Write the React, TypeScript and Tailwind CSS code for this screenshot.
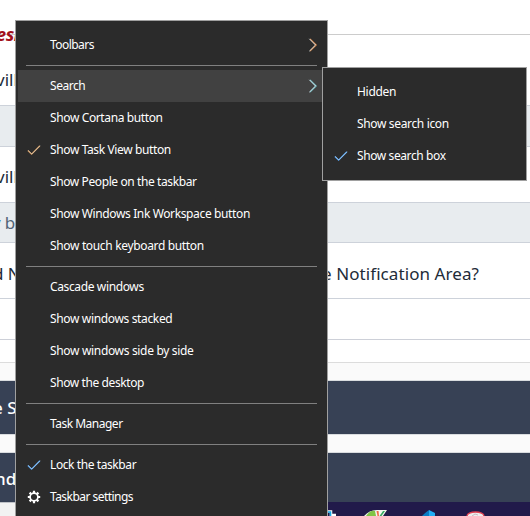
import React from "react";

function Check({ tint }: { tint: string }) {
  return (
    <svg width="14" height="12" viewBox="0 0 14 12" fill="none">
      <path d="M1.2 6.3 L4.9 10 L13.2 1.6" stroke={tint} strokeWidth="1.3" transform="translate(-.3 .2)" />
      <path d="M1.2 6.3 L4.9 10 L13.2 1.6" stroke="#dbe6ee" strokeOpacity=".45" strokeWidth=".9" />
    </svg>
  );
}

function Chevron({ right }: { right: string }) {
  return (
    <svg width="10" height="14" viewBox="0 0 10 14" fill="none">
      <path d="M2 .8 L8.2 7 L2 13.2" stroke={right} strokeWidth="1.2" />
      <path d="M1.3 .8 L7.5 7 L1.3 13.2" stroke="#e3f1fb" strokeWidth=".8" />
    </svg>
  );
}

function Gear() {
  return (
    <svg width="14" height="14" viewBox="0 0 14 14" fill="none" stroke="#fff">
      <circle cx="7" cy="7" r="3.9" strokeWidth="1.7" />
      <path
        d="M7 .8V3M7 11V13.2M.8 7H3M11 7H13.2M2.6 2.6L4.1 4.1M11.4 2.6L9.9 4.1M2.6 11.4L4.1 9.9M11.4 11.4L9.9 9.9"
        strokeWidth="2.2"
      />
    </svg>
  );
}

type ItemProps = {
  label: string;
  spacing: string;
  icon?: React.ReactNode;
  end?: React.ReactNode;
  active?: boolean;
};

function Item({ label, spacing, icon, end, active }: ItemProps) {
  return (
    <div className={`mx-[2px] flex h-8 shrink-0 items-center ${active ? "bg-[#414141]" : ""}`}>
      <span className="flex w-8 justify-center pr-[1px]">{icon}</span>
      <span className={`flex-1 whitespace-nowrap text-xs ${spacing}`}>{label}</span>
      <span className="pr-[7px]">{end}</span>
    </div>
  );
}

function Separator() {
  return <div className="mx-[10px] my-1 h-px shrink-0 bg-[#808080]" />;
}

function Page() {
  return (
    <div className="flex h-[516px] w-[530px] flex-col whitespace-nowrap bg-white font-['Noto_Sans',sans-serif] text-[17px] leading-6 text-[#222b38]">
      <div className="h-[35px] shrink-0 border-b border-[#ccc] pt-[22px]">
        <span className="-ml-[4px] inline-block text-[18px] font-bold italic tracking-[-0.4px] text-[#a3101b]">esl</span>
      </div>
      <div className="h-[70px] shrink-0 pt-[33px]">
        <span className="-ml-[4px] inline-block">vill</span>
      </div>
      <div className="h-[42px] shrink-0 border-y border-[#cdd2da] bg-[#e8ecef]" />
      <div className="h-[55px] shrink-0 pt-[18px]">
        <span className="-ml-[4px] inline-block">vill</span>
      </div>
      <div className="flex h-[41px] shrink-0 items-center border-y border-[#cdd2da] bg-[#e8ecef]">
        <span className="-ml-[8px] text-[#3479af]">y</span>
        <span className="ml-[4px] text-[#526577]">b</span>
      </div>
      <div className="flex h-[56px] shrink-0 items-center border-b border-[#cdd2da] pt-[7px]">
        <span className="-ml-[7px] w-[329px]">d N</span>
        <span className="tracking-[0.08px]">e Notification Area?</span>
      </div>
      <div className="h-[41px] shrink-0 border-b border-[#cdd0d8]" />
      <div className="h-[23px] shrink-0 border-b border-[#dcdcdc]" />
      <div className="h-[18px] shrink-0 border-b border-[#d9dcdf] bg-[#fafafa]" />
      <div className="flex h-[53px] shrink-0 items-center bg-[#374155] font-medium text-white">
        <span className="-ml-[7px]">e S</span>
      </div>
      <div className="h-[19px] shrink-0 border-y border-[#d9dcdf] bg-[#fafafa]" />
      <div className="flex h-[49px] shrink-0 items-center bg-[#374155] pt-[2px] font-medium text-white">
        <span className="-ml-[5px]">nd</span>
      </div>
      <div className="flex h-[14px] shrink-0">
        <div className="w-[16px] border-t border-[#bfc2c7] bg-[#f2f2f2]" />
        <div className="flex-1 bg-[#211a4a]">
          <svg className="ml-[311px]" width="203" height="14" viewBox="0 0 203 14">
            <path d="M0 9.5H4V13H9" fill="none" stroke="#fff" strokeWidth="2.5" />
            <path d="M0 10H3.5V14" fill="none" stroke="#13a7e5" strokeWidth="1.6" />
            <path d="M37 14Q43 7 52 8H60L56 14Z" fill="#f4f6ee" />
            <path d="M39 14Q43 8 48 9L49 14Z" fill="#80c445" />
            <path d="M49.5 9H51.5L52 14H50.5Z" fill="#ef6948" />
            <path d="M56 9H58L54.5 14H52.5Z" fill="#35aa62" />
            <path d="M95 14Q99 10 102 8L102 14Z" fill="#087bc4" />
            <path d="M102 8L108 11V14H102Z" fill="#20aef5" />
            <ellipse cx="148.5" cy="14" rx="8.5" ry="4" fill="#eee" stroke="#e34153" strokeWidth="1.3" />
            <path d="M145 14L148 12L151 13" fill="none" stroke="#c8b8c0" />
          </svg>
        </div>
      </div>
    </div>
  );
}

export default function App() {
  return (
    <div className="relative h-[516px] w-[530px] overflow-hidden">
      <Page />
      <div className="absolute left-[15px] top-[20px] flex h-[496px] w-[313px] flex-col border border-b-0 border-[#a0a0a0] bg-[#2b2b2b] pt-2 font-['Noto_Sans',sans-serif] text-white">
        <Item label="Toolbars" spacing="tracking-[-0.55px]" end={<Chevron right="#d88746" />} />
        <Separator />
        <Item label="Search" spacing="tracking-[-0.45px]" end={<Chevron right="#70b8bd" />} active />
        <Item label="Show Cortana button" spacing="tracking-[-0.38px]" />
        <Item label="Show Task View button" spacing="tracking-[-0.38px]" icon={<Check tint="#d69c60" />} />
        <Item label="Show People on the taskbar" spacing="tracking-[-0.4px]" />
        <Item label="Show Windows Ink Workspace button" spacing="tracking-[-0.37px]" />
        <Item label="Show touch keyboard button" spacing="tracking-[-0.34px]" />
        <Separator />
        <Item label="Cascade windows" spacing="tracking-[-0.37px]" />
        <Item label="Show windows stacked" spacing="tracking-[-0.35px]" />
        <Item label="Show windows side by side" spacing="tracking-[-0.33px]" />
        <Item label="Show the desktop" spacing="tracking-[-0.4px]" />
        <Separator />
        <Item label="Task Manager" spacing="tracking-[-0.5px]" />
        <Separator />
        <Item label="Lock the taskbar" spacing="tracking-[-0.41px]" icon={<Check tint="#58a5f3" />} />
        <Item label="Taskbar settings" spacing="tracking-[-0.54px]" icon={<Gear />} />
      </div>
      <div className="absolute left-[322px] top-[67px] flex h-[114px] w-[205px] flex-col border border-[#a0a0a0] bg-[#2b2b2b] pt-2 font-['Noto_Sans',sans-serif] text-white">
        <Item label="Hidden" spacing="tracking-[-0.3px]" />
        <Item label="Show search icon" spacing="tracking-[-0.35px]" />
        <Item label="Show search box" spacing="tracking-[-0.4px]" icon={<Check tint="#58a5f3" />} />
      </div>
    </div>
  );
}
